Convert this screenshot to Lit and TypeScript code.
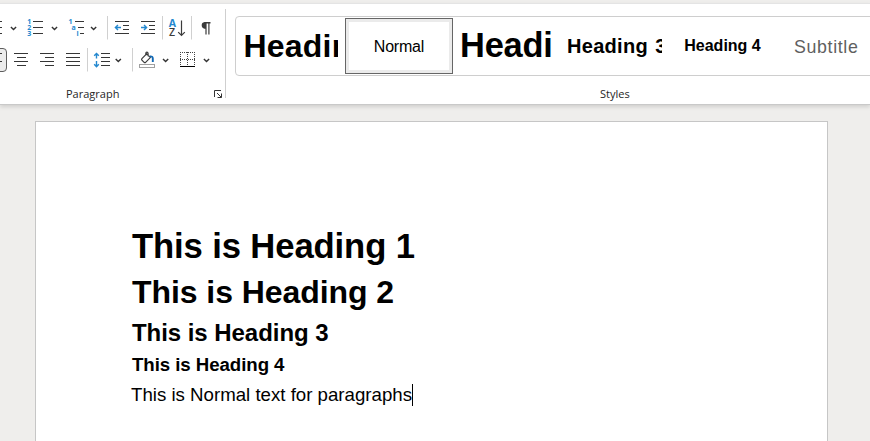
import { LitElement, html, svg, css, SVGTemplateResult } from "lit";
import { customElement, property } from "lit/decorators.js";
import { classMap } from "lit/directives/class-map.js";

// A slot of the toolbar: its left edge, its width and its drawing.
// Drawings share the ribbon's coordinate system through their viewBox.
type Slot = [number, number, SVGTemplateResult];

const hline = (x1: number, x2: number, y: number) => svg`<path class="line" d="M${x1} ${y}H${x2}"/>`;
const chevron = (x: number, y: number) => svg`<path class="chev" d="M${x - 2.6} ${y - 1.3}l2.6 2.6 2.6-2.6"/>`;
const divider = (x: number, y: number) => svg`<path class="rule" d="M${x} ${y}v23.5"/>`;
const rows = (ys: number[], spans: [number, number][]) => ys.map((y, i) => hline(spans[i][0], spans[i][1], y));
const Y = [53.5, 57.5, 61.5, 65.5];

const topRow: Slot[] = [
  [0, 6, svg`${[21.5, 27.5, 33.5].map((y) => hline(0, 2, y))}`],
  [6, 16, chevron(13.5, 28.3)],
  [22, 25, svg`${[21.5, 27.5, 33.5].map((y) => hline(33, 43, y))}
    <text class="tiny" x="27.3" y="24.3">1</text><text class="tiny" x="27.3" y="30.2">2</text><text class="tiny" x="27.3" y="36">3</text>`],
  [47, 17, chevron(54.5, 28.3)],
  [64, 23, svg`${hline(75, 84, 21.5)}${hline(78, 84, 27.5)}${hline(80, 84, 33.5)}
    <text class="tiny" x="68.5" y="24.3">1</text><text class="tiny" x="71.4" y="30">a</text><text class="tiny" x="76.5" y="36">i</text>`],
  [87, 15, chevron(93.6, 28.3)],
  [102, 10, divider(107.5, 16)],
  [112, 22, svg`${rows([21.5, 25.5, 29.5, 33.5], [[115, 129], [123, 129], [123, 129], [115, 129]])}
    <path class="blue" d="M121 27.5h-5.5m2.5-2.6l-2.6 2.6 2.6 2.6"/>`],
  [134, 26, svg`${rows([21.5, 25.5, 29.5, 33.5], [[141, 155], [149, 155], [149, 155], [141, 155]])}
    <path class="blue" d="M141 27.5h5.5m-2.5-2.6l2.6 2.6-2.6 2.6"/>`],
  [160, 5, divider(162.5, 16)],
  [165, 23, svg`<text class="sort top" x="172.3" y="27">A</text><text class="sort" x="172.1" y="36.3">Z</text>
    <path class="ink" d="M181.5 20.5v15M178.2 32.1l3.3 3.4 3.3-3.4"/>`],
  [188, 7, divider(191.5, 16)],
  [195, 22, svg`<path class="fill" d="M204.5 22h6v1.4h-1v11h-1.2v-11h-1.7v11h-1.2V28.7h-.9a3.4 3.4 0 0 1 0-6.7z"/>`],
];

const bottomRow: Slot[] = [
  [0, 9, svg`<rect class="pressed" x="-16.5" y="48.5" width="23" height="23" rx="3.5"/>${hline(0, 2, 53.5)}${hline(0, 2, 61.5)}`],
  [9, 25, svg`${rows(Y, [[14, 28], [17, 26], [14, 28], [17, 26]])}`],
  [34, 26, svg`${rows(Y, [[40, 54], [45, 54], [40, 54], [45, 54]])}`],
  [60, 24, svg`${rows(Y, [[66, 80], [66, 80], [66, 80], [66, 80]])}`],
  [84, 6, divider(87.5, 48)],
  [90, 22, svg`${Y.map((y) => hline(101, 110, y))}
    <path class="blue" d="M96.5 53.6v5M94.2 55.8l2.3-2.4 2.3 2.4M96.5 61v5.4M94.2 64.3l2.3 2.4 2.3-2.4"/>`],
  [112, 16, chevron(118.3, 60.3)],
  [128, 8, divider(132.5, 48)],
  [136, 22, svg`<path class="ink" d="M146.6 53.8l-4.7 4.8q-.7.8 0 1.5l2.2 2.2q.8.7 1.5 0l4.7-4.7zM145.8 55.4v-1.8q0-1.4 1.1-1.4t1.2 1.4v2.6"/>
    <path class="dark-blue" d="M149.8 56.4q3-.4 3 2v3.5"/>
    <rect class="swatch" x="139.5" y="64.5" width="15" height="3"/>`],
  [158, 17, chevron(165.6, 60.3)],
  [175, 24, svg`<path class="dots" d="M180 52.5h15M180 59.5h15M180.5 52v14M187.5 52v14M194.5 52v14"/>
    <path class="fill black" d="M180 66h15v1h-15z"/>`],
  [199, 16, chevron(206.5, 60.3)],
];

@customElement("tool-row")
class ToolRow extends LitElement {
  @property({ attribute: false }) slots: Slot[] = [];
  @property({ type: Number }) top = 0;
  static styles = css`
    :host { display: flex; height: 32px; }
    svg { display: block; flex: none; }
    .line, .ink, .chev, .blue, .dark-blue, .rule, .dots { fill: none; }
    .line { stroke: #363636; }
    .ink { stroke: #3b3b3b; stroke-width: 1.2; }
    .chev { stroke: #333; stroke-width: 1.4; }
    .blue { stroke: #2488cf; stroke-width: 1.4; }
    .dark-blue { stroke: #1269b5; stroke-width: 1.9; }
    .rule { stroke: #d0d0d0; }
    .dots { stroke: #444; stroke-dasharray: 1 1; }
    .fill { fill: #3b3b3b; }
    .black { fill: #000; }
    .pressed { fill: #ebebeb; stroke: #5e5e5e; }
    .swatch { fill: #fff; stroke: #a0a0a0; }
    .tiny { font: bold 7px "Open Sans", "Noto Sans", sans-serif; fill: #2488cf; }
    .sort { font: 600 10.5px "Open Sans", "Noto Sans", sans-serif; text-anchor: middle; fill: #3b3b3b; }
    .top { font-weight: bold; fill: #2488cf; }
  `;
  render() {
    return this.slots.map(([x, w, art]) => html`<svg width=${w} height="32" viewBox="${x} ${this.top} ${w} 32">${art}</svg>`);
  }
}

@customElement("style-gallery")
class StyleGallery extends LitElement {
  static styles = css`
    :host {
      display: flex; box-sizing: border-box; width: 660px; height: 60px; padding: 1px;
      border: 1px solid #cecece; border-radius: 4px; background: #fff;
      font-family: "Liberation Sans", Arial, sans-serif; color: #000;
    }
    .cell {
      box-sizing: border-box; flex: none; width: 108px; height: 56px; padding: 0 7px 0 6px;
      display: flex; align-items: center; white-space: nowrap;
    }
    .selected { border: 1px solid #666; box-shadow: inset 0 0 0 3px #ebebeb; padding: 1px 0 0; justify-content: center; }
    .label { display: block; box-sizing: border-box; overflow: hidden; width: 100%; line-height: 42px; }
    .h1, .h2, .h3, .h4 { font-weight: bold; }
    .h1 { font-size: 32px; letter-spacing: 0.2px; padding-left: 0.5px; }
    .h2 { font-size: 34.4px; letter-spacing: -0.2px; padding-left: 1px; margin-right: 2px; line-height: 40px; padding-bottom: 2px; }
    .h3 { font-size: 20px; letter-spacing: 0.3px; word-spacing: 1.5px; }
    .h4 { font-size: 16px; text-align: center; }
    .normal { font-size: 16px; width: auto; letter-spacing: -0.2px; }
    .subtitle { font: 17.8px/42px "Liberation Sans", Arial, sans-serif; letter-spacing: 0.65px; color: #5f5f5f; padding: 2px 0 0 11px; }
  `;
  render() {
    const items = [
      ["h1", "Heading 1"], ["normal", "Normal"], ["h2", "Heading 2"],
      ["h3", "Heading 3"], ["h4", "Heading 4"], ["subtitle", "Subtitle"],
    ];
    return items.map(([kind, text]) => html`
      <div class=${classMap({ cell: true, selected: kind === "normal" })}><span class="label ${kind}">${text}</span></div>`);
  }
}

@customElement("app-root")
class AppRoot extends LitElement {
  static styles = css`
    :host { display: flex; flex-direction: column; box-sizing: border-box; width: 870px; height: 441px; overflow: hidden; background: #efeeec; }
    .ribbon {
      display: flex; flex: none; box-sizing: border-box; height: 102px; margin-top: 3px;
      border-top: 1px solid #e4e4e4; border-bottom: 1px solid #c9c9c9;
      background: #fff; box-shadow: 0 2px 4px rgba(0, 0, 0, 0.13);
      font: 11px/16px "Open Sans", "Noto Sans", sans-serif; color: #262626;
    }
    .paragraph { flex: none; box-sizing: border-box; width: 225px; padding-top: 8px; }
    .caption { display: flex; padding: 10px 0 0 66px; }
    .caption span { width: 148px; white-space: nowrap; }
    .launcher { display: block; margin-top: 4px; }
    .split { flex: none; width: 1px; height: 89px; margin-top: 5px; background: #cfcfcf; }
    .styles { flex: none; width: 660px; padding: 12px 0 0 9px; }
    .styles .name { padding: 10px 0 0 365px; }
    .sheet {
      flex: 1; box-sizing: border-box; width: 793px; margin: 16px 0 0 35px; padding: 102px 0 0 96px;
      border: 1px solid #c6c6c6; border-bottom: 0; background: #fff; color: #000;
      font-family: "Liberation Sans", Arial, sans-serif; white-space: nowrap;
    }
    h1, h2, h3, h4, p { margin: 0; }
    h1 { font-size: 34.67px; line-height: 44px; letter-spacing: -0.13px; }
    h2 { font-size: 32px; line-height: 48px; letter-spacing: -0.07px; }
    h3 { font-size: 24px; line-height: 34px; letter-spacing: -0.05px; }
    h4 { font-size: 18.67px; line-height: 29px; letter-spacing: -0.06px; }
    p { display: flex; align-items: center; font-size: 18.67px; line-height: 31px; margin-left: -1px; }
    .caret { width: 1px; height: 22px; background: #000; }
  `;
  render() {
    return html`
      <div class="ribbon">
        <div class="paragraph">
          <tool-row .slots=${topRow} .top=${12}></tool-row>
          <tool-row .slots=${bottomRow} .top=${44}></tool-row>
          <div class="caption">
            <span>Paragraph</span>
            <svg class="launcher" width="9" height="9" viewBox="0 0 9 9" fill="none" stroke="#333">
              <path d="M.5 7V.5H7M3 3l4.3 4.3M7.5 3.5v4h-4"/>
            </svg>
          </div>
        </div>
        <div class="split"></div>
        <div class="styles">
          <style-gallery></style-gallery>
          <div class="name">Styles</div>
        </div>
      </div>
      <div class="sheet">
        <h1>This is Heading 1</h1>
        <h2>This is Heading 2</h2>
        <h3>This is Heading 3</h3>
        <h4>This is Heading 4</h4>
        <p><span>This is Normal text for paragraphs</span><i class="caret"></i></p>
      </div>`;
  }
}
